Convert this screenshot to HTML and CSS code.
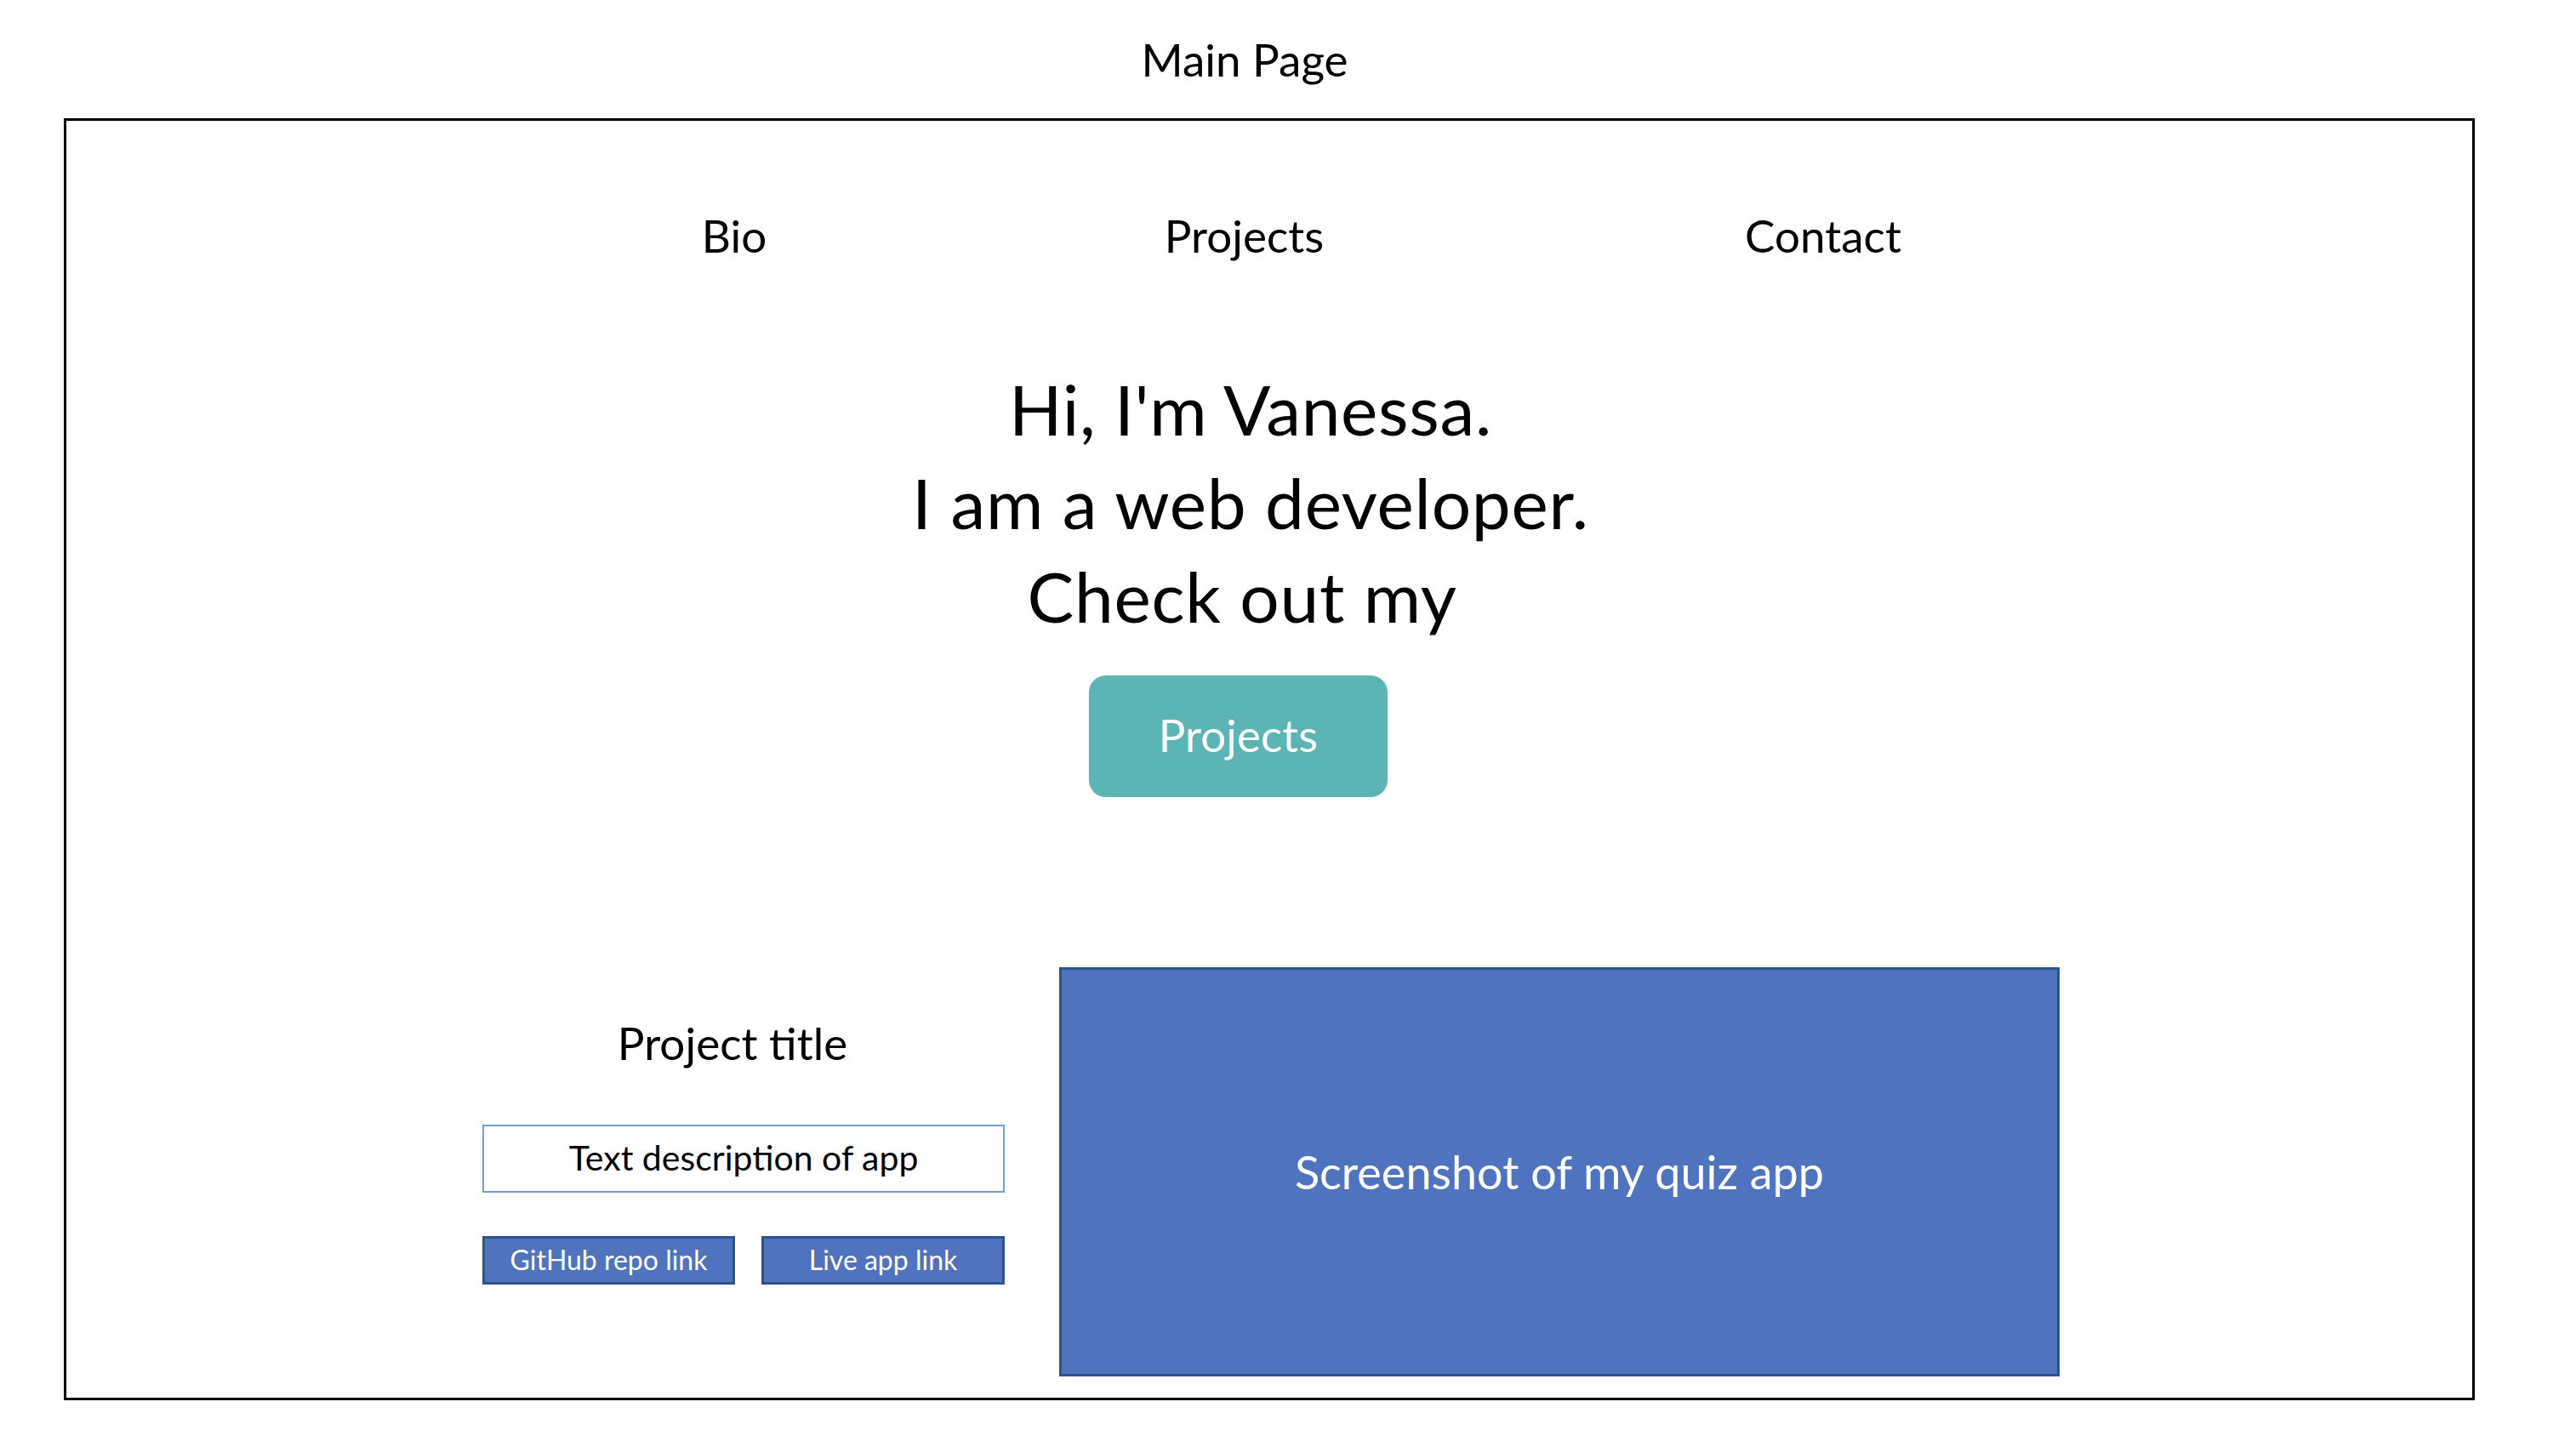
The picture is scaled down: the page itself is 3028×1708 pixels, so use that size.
FILE: index.html
```html
<!DOCTYPE html>
<html lang="en">
<head>
<meta charset="utf-8">
<title>Main Page</title>
<link rel="stylesheet" href="styles.css">
</head>
<body>
  <h1 class="page-title">Main Page</h1>
  <div class="frame">
    <nav class="nav">
      <span class="nav-item">Bio</span>
      <span class="nav-item">Projects</span>
      <span class="nav-item">Contact</span>
    </nav>
    <div class="hero">
      <div class="hero-line">Hi, I'm Vanessa.</div>
      <div class="hero-line">I am a web developer.</div>
      <div class="hero-line">Check out my&nbsp;</div>
    </div>
    <div class="cta">Projects</div>
    <section class="project">
      <div class="project-info">
        <div class="project-title">Project title</div>
        <div class="project-desc">Text description of app</div>
        <div class="project-links">
          <span class="link-btn link-github">GitHub repo link</span>
          <span class="link-btn link-live">Live app link</span>
        </div>
      </div>
      <div class="shot">Screenshot of my quiz app</div>
    </section>
  </div>
</body>
</html>
```

FILE: styles.css
```css
html, body {
  margin: 0;
  padding: 0;
  background: #ffffff;
}
body {
  font-family: Lato, "Liberation Sans", sans-serif;
  color: #000000;
  width: 3028px;
  height: 1708px;
  overflow: hidden;
}
.page-title {
  margin: 38px 0 0 0;
  padding-right: 102px;
  font-size: 53px;
  line-height: 64px;
  font-weight: 400;
  text-align: center;
}
.frame {
  box-sizing: border-box;
  margin: 37px 0 0 75px;
  width: 2834px;
  height: 1507px;
  border: 3px solid #000000;
  display: flex;
  flex-direction: column;
}
.nav {
  margin: 103px 0 0 485px;
  display: grid;
  grid-template-columns: 600px 599px 762px;
  font-size: 53px;
  line-height: 64px;
}
.nav-item {
  text-align: center;
}
.hero {
  margin-top: 116px;
  padding-right: 44px;
  text-align: center;
  font-size: 82px;
  line-height: 110px;
  letter-spacing: 0.7px;
}
.cta {
  box-sizing: border-box;
  margin: 39px 0 0 1202px;
  width: 351px;
  height: 143px;
  padding-bottom: 3px;
  border-radius: 20px;
  background: #5ab5b4;
  color: #ffffff;
  font-size: 53px;
  line-height: 64px;
  display: flex;
  align-items: center;
  justify-content: center;
}
.project {
  margin: 200px 0 0 489px;
  display: flex;
  gap: 64px;
}
.project-info {
  width: 614px;
  display: flex;
  flex-direction: column;
  padding-top: 57px;
}
.project-title {
  font-size: 53px;
  line-height: 64px;
  text-align: center;
  padding-right: 26px;
}
.project-desc {
  box-sizing: border-box;
  margin-top: 64px;
  height: 80px;
  padding-bottom: 3px;
  border: 2px solid #6e9fd5;
  font-size: 41px;
  display: flex;
  align-items: center;
  justify-content: center;
}
.project-links {
  margin-top: 51px;
  display: flex;
  gap: 31px;
}
.link-btn {
  box-sizing: border-box;
  height: 57px;
  padding-bottom: 3px;
  background: #4f73bf;
  border: 3px solid #2f528f;
  color: #ffffff;
  font-size: 32px;
  display: flex;
  align-items: center;
  justify-content: center;
}
.link-github {
  width: 297px;
}
.link-live {
  width: 286px;
}
.shot {
  box-sizing: border-box;
  width: 1176px;
  height: 481px;
  background: #4f73bf;
  border: 3px solid #2f528f;
  color: #ffffff;
  font-size: 54px;
  display: flex;
  align-items: center;
  justify-content: center;
}
```
